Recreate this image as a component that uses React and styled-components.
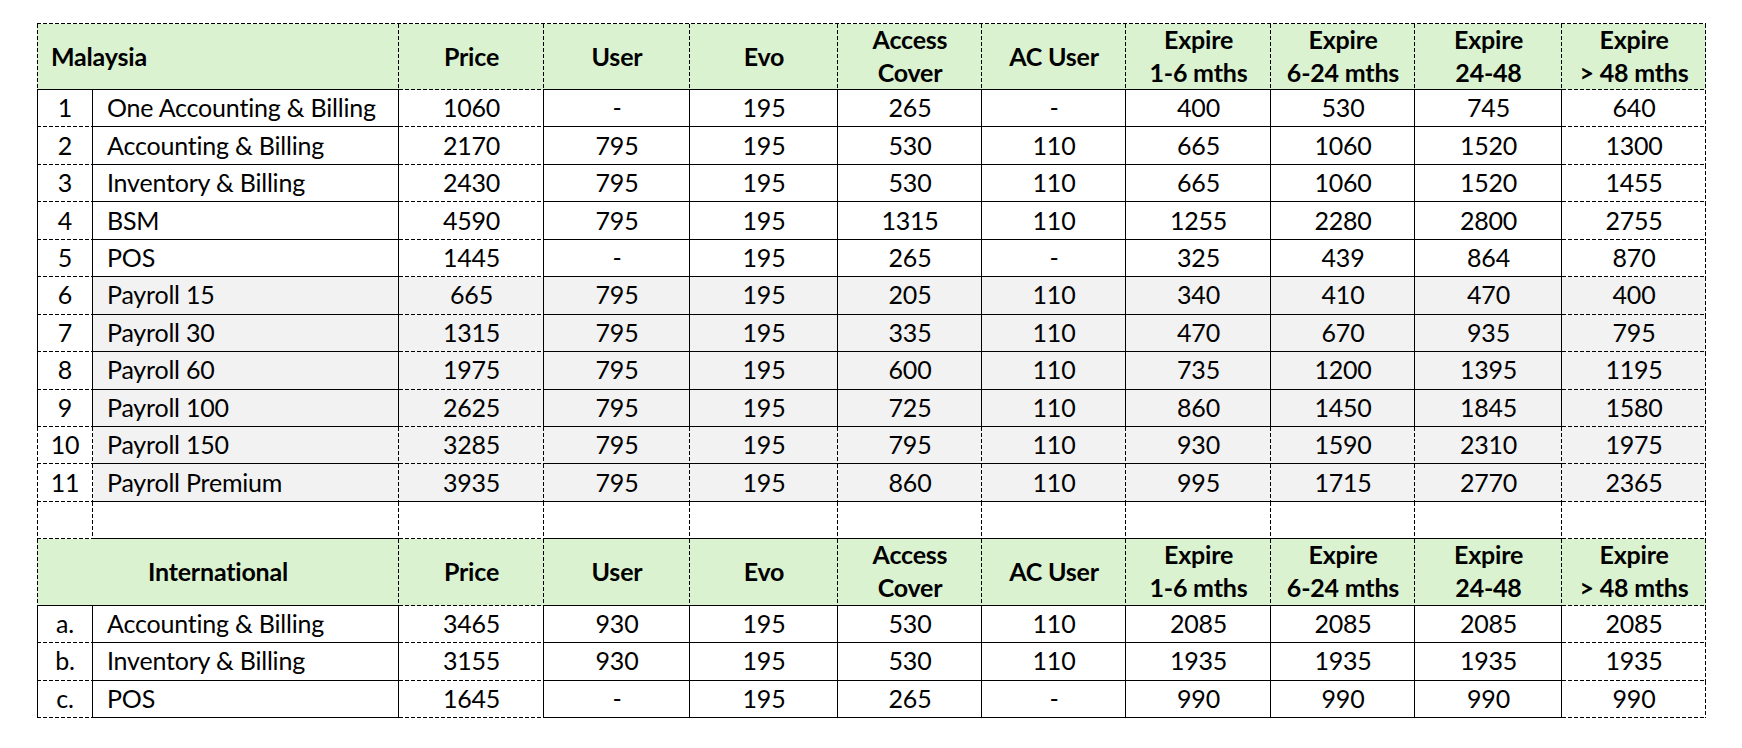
import React from 'react'
import styled, { createGlobalStyle } from 'styled-components'

const GlobalStyle = createGlobalStyle`
  body {
    margin: 0;
    background: #ffffff;
  }
`;

const widths = [56, 306, 145, 146, 148, 144, 144, 145, 144, 147, 144];

const headers = [
  ['Price'], ['User'], ['Evo'], ['Access', 'Cover'], ['AC User'],
  ['Expire', '1-6 mths'], ['Expire', '6-24 mths'], ['Expire', '24-48'], ['Expire', '> 48 mths'],
];

const malaysia = [
  ['1', 'One Accounting & Billing', '1060', '-', '195', '265', '-', '400', '530', '745', '640'],
  ['2', 'Accounting & Billing', '2170', '795', '195', '530', '110', '665', '1060', '1520', '1300'],
  ['3', 'Inventory & Billing', '2430', '795', '195', '530', '110', '665', '1060', '1520', '1455'],
  ['4', 'BSM', '4590', '795', '195', '1315', '110', '1255', '2280', '2800', '2755'],
  ['5', 'POS', '1445', '-', '195', '265', '-', '325', '439', '864', '870'],
  ['6', 'Payroll 15', '665', '795', '195', '205', '110', '340', '410', '470', '400'],
  ['7', 'Payroll 30', '1315', '795', '195', '335', '110', '470', '670', '935', '795'],
  ['8', 'Payroll 60', '1975', '795', '195', '600', '110', '735', '1200', '1395', '1195'],
  ['9', 'Payroll 100', '2625', '795', '195', '725', '110', '860', '1450', '1845', '1580'],
  ['10', 'Payroll 150', '3285', '795', '195', '795', '110', '930', '1590', '2310', '1975'],
  ['11', 'Payroll Premium', '3935', '795', '195', '860', '110', '995', '1715', '2770', '2365'],
];

const international = [
  ['a.', 'Accounting & Billing', '3465', '930', '195', '530', '110', '2085', '2085', '2085', '2085'],
  ['b.', 'Inventory & Billing', '3155', '930', '195', '530', '110', '1935', '1935', '1935', '1935'],
  ['c.', 'POS', '1645', '-', '195', '265', '-', '990', '990', '990', '990'],
];

// solid bottom edges on the bordered columns, gridline dashes elsewhere
const bottomOf = (col, withPrice) => {
  if (col === 0 || col === 10) return 'dashed';
  if (col === 2 && !withPrice) return 'dashed';
  return 'solid';
};

// excel style lines: 4px dash, 2px gap, drawn as background layers
const INK = '#000';
const hLine = kind =>
  kind === 'solid'
    ? `linear-gradient(${INK}, ${INK})`
    : `repeating-linear-gradient(to right, ${INK} 0 4px, transparent 4px 6px)`;
const vLine = kind =>
  kind === 'solid'
    ? `linear-gradient(${INK}, ${INK})`
    : `repeating-linear-gradient(to bottom, ${INK} 0 4px, transparent 4px 6px)`;

const edges = ({ $bottom, $right, $edge }) => {
  const layers = [];
  if ($bottom) layers.push(`${hLine($bottom)} left bottom / 100% 1px no-repeat`);
  if ($right) layers.push(`${vLine($right)} right top / 1px 100% no-repeat`);
  if ($edge) layers.push(`${vLine($edge)} left top / 1px 100% no-repeat`);
  return layers.join(', ');
};

const Sheet = styled.div`
  margin: 23px 0 0 37px;
  padding-top: 1px;
  display: grid;
  grid-template-columns: ${widths.map(w => w + 'px').join(' ')};
  grid-template-rows: 66px repeat(11, 37.45px) 37px 67px repeat(3, 37.4px);
  width: max-content;
  background: ${hLine('dashed')} left top / 100% 1px no-repeat;
  font-family: Lato, "Open Sans", sans-serif;
  color: #000;
`;

const Cell = styled.div`
  box-sizing: border-box;
  display: flex;
  align-items: center;
  justify-content: ${p => (p.$left ? 'flex-start' : 'center')};
  padding: ${p => (p.$left ? '0 0 3px 14px' : '0 0 3px 0')};
  background: ${edges};
  background-color: ${p => p.$fill || '#ffffff'};
  font-size: 25px;
  letter-spacing: -0.2px;
  white-space: nowrap;
`;

const HeadCell = styled(Cell)`
  flex-direction: column;
  justify-content: center;
  align-items: ${p => (p.$left ? 'flex-start' : 'center')};
  padding-left: ${p => (p.$left ? '14px' : '0')};
  padding-bottom: 2px;
  font-weight: 700;
  line-height: 33px;
  grid-column: ${p => (p.$span ? `span ${p.$span}` : 'auto')};
`;

const GREEN = '#daf2d0';
const GREY = '#f2f2f2';

const HeaderRow = ({ title, align }) => (
  <>
    <HeadCell $span={2} $fill={GREEN} $right="dashed" $bottom="solid" $edge="dashed" $left={align === 'left'}>
      {title}
    </HeadCell>
    {headers.map((lines, i) => (
      <HeadCell key={i} $fill={GREEN} $right="dashed" $bottom={bottomOf(i + 2, false)}>
        {lines.map(l => <span key={l}>{l}</span>)}
      </HeadCell>
    ))}
  </>
);

const DataRow = ({ cells, solid, shaded, withPrice }) => (
  <>
    {cells.map((v, col) => (
      <Cell
        key={col}
        $left={col === 1}
        $fill={shaded && col > 0 ? GREY : null}
        $edge={col === 0 ? (solid ? 'solid' : 'dashed') : null}
        $right={col === 10 ? 'dashed' : solid ? 'solid' : 'dashed'}
        $bottom={bottomOf(col, withPrice)}
      >
        {v}
      </Cell>
    ))}
  </>
);

const blank = Array(11).fill('');

export default function App() {
  return (
    <>
      <GlobalStyle />
      <Sheet>
        <HeaderRow title="Malaysia" align="left" />
        {malaysia.map((row, i) => (
          <DataRow
            key={row[0]}
            cells={row}
            solid={i < 9}
            shaded={i >= 5}
            withPrice={i === 10}
          />
        ))}
        <DataRow cells={blank} solid={false} shaded={false} withPrice={false} />
        <HeaderRow title="International" align="center" />
        {international.map(row => (
          <DataRow key={row[0]} cells={row} solid shaded={false} withPrice={false} />
        ))}
      </Sheet>
    </>
  );
}
